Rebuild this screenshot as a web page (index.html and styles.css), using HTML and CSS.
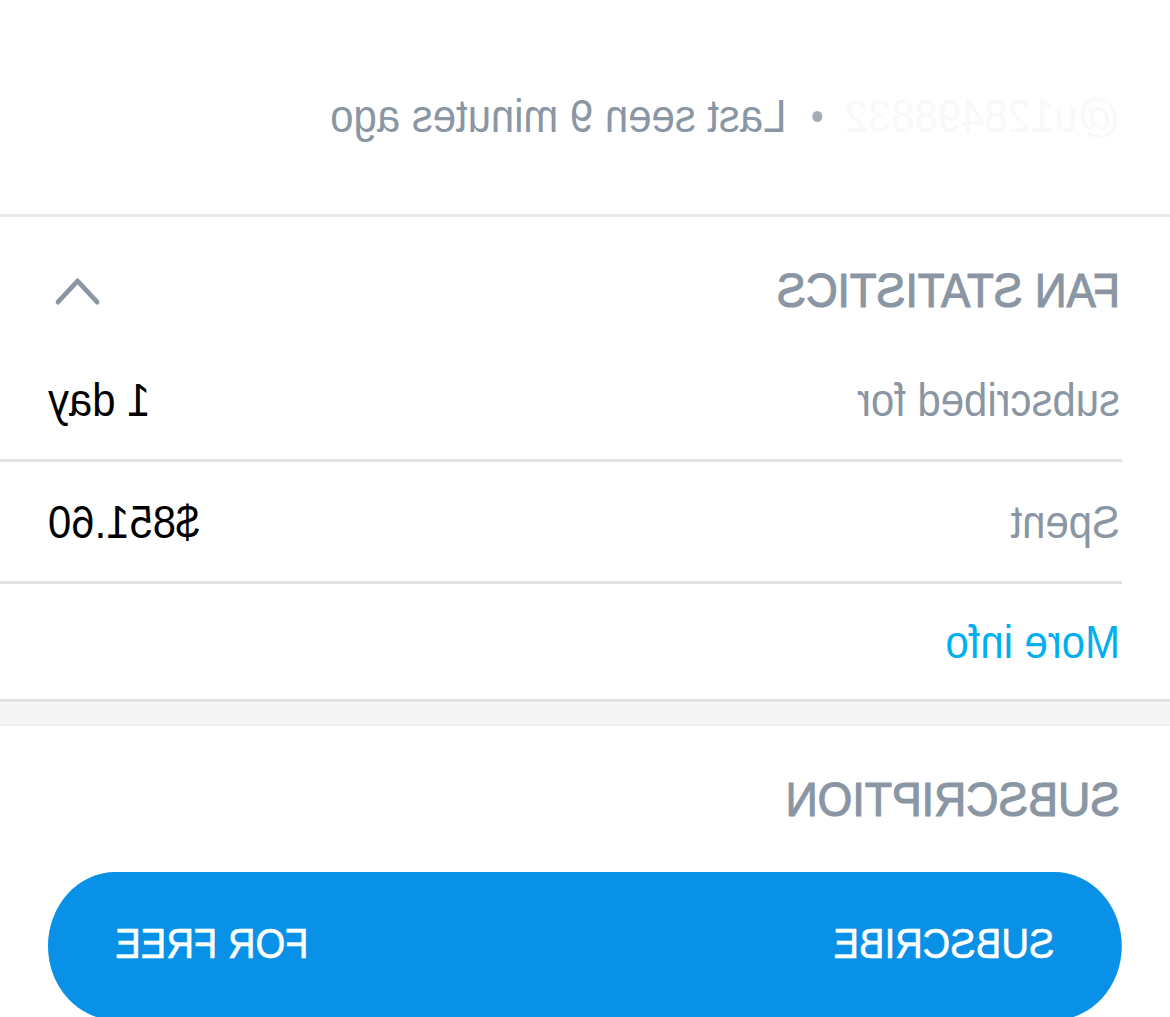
FILE: index.html
```html
<!DOCTYPE html>
<html>
  <head>
    <meta charset="utf-8">
    <meta name="viewport" content="width=device-width, initial-scale=1">
    <title>Fan statistics</title>
    <link rel="stylesheet" href="styles.css">
  </head>
  <body>
    <div class="frame">
      <div class="page">
        <header class="profile-line">
          <span class="username">@u128498832</span>
          <span class="dot"></span>
          <span class="last-seen">Last seen 9 minutes ago</span>
        </header>

        <section class="stats">
          <div class="section-head">
            <h2 class="section-title">FAN STATISTICS</h2>
            <svg class="chevron" width="49" height="28" viewBox="0 0 49 28">
              <polyline points="3,25 24.5,4 46,25" fill="none" stroke="#8a96a3" stroke-width="5" stroke-linecap="round" stroke-linejoin="round"/>
            </svg>
          </div>
          <div class="stat-row">
            <span class="label">subscribed for</span>
            <span class="value">1 day</span>
          </div>
          <div class="stat-row">
            <span class="label">Spent</span>
            <span class="value">$851.60</span>
          </div>
          <div class="stat-row more">
            <a class="more-link" href="#">More info</a>
          </div>
        </section>

        <div class="gap-band"></div>

        <section class="subscription">
          <h2 class="section-title">SUBSCRIPTION</h2>
          <button class="sub-btn">
            <span>SUBSCRIBE</span>
            <span>FOR FREE</span>
          </button>
        </section>
      </div>
    </div>
  </body>
</html>
```

FILE: styles.css
```css
* {
  font-family: "Liberation Sans", Arial, sans-serif;
  box-sizing: border-box;
}

html, body {
  margin: 0;
  background: #fff;
  overflow: hidden;
}

.frame {
  width: 1170px;
  height: 1017px;
  overflow: hidden;
}

/* the capture is mirrored and a little squeezed sideways */
.page {
  width: 1286px;
  height: 1017px;
  transform: translateX(1170px) scale(-0.91, 1);
  transform-origin: 0 0;
}

.profile-line {
  display: flex;
  align-items: center;
  height: 217px;
  padding: 18px 0 0 55px;
  font-size: 46px;
  color: #8a96a3;
  border-bottom: 3px solid #e8e9ea;
}

.username {
  color: #f8f9fa;
}

.dot {
  width: 11px;
  height: 11px;
  border-radius: 50%;
  background: #a3adb7;
  margin: 0 29px 0 24px;
}

.stats {
  border-bottom: 3px solid #e1e2e4;
}

.section-head {
  display: flex;
  justify-content: space-between;
  align-items: center;
  height: 123px;
  padding: 25px 61px 0 55px;
}

.section-title {
  margin: 0;
  font-size: 48px;
  line-height: 1;
  font-weight: normal;
  -webkit-text-stroke: 1.2px #8a96a3;
  color: #8a96a3;
}

.stat-row {
  display: flex;
  justify-content: space-between;
  align-items: center;
  height: 122px;
  margin-left: 53px;
  padding: 0 53px 0 2px;
  font-size: 46px;
  border-bottom: 3px solid #dfe3e6;
}

.label {
  color: #8a96a3;
}

.value {
  color: #000;
}

.stat-row.more {
  height: 115px;
  border-bottom: none;
}

.more-link {
  color: #00aff0;
  text-decoration: none;
}

.gap-band {
  height: 24px;
  background: #f5f5f5;
  border-bottom: 2px solid #efefef;
}

.subscription {
  padding-top: 49px;
}

.subscription .section-title {
  font-size: 49px;
  padding-left: 55px;
  margin-bottom: 48px;
}

.sub-btn {
  display: flex;
  justify-content: space-between;
  align-items: center;
  width: 1180px;
  height: 148px;
  margin: 0 53px;
  padding: 0 74px 4px;
  border: none;
  border-radius: 74px;
  background: #0891e6;
  color: #fff;
  font-size: 42px;
  -webkit-text-stroke: 0.6px #fff;
}
```
